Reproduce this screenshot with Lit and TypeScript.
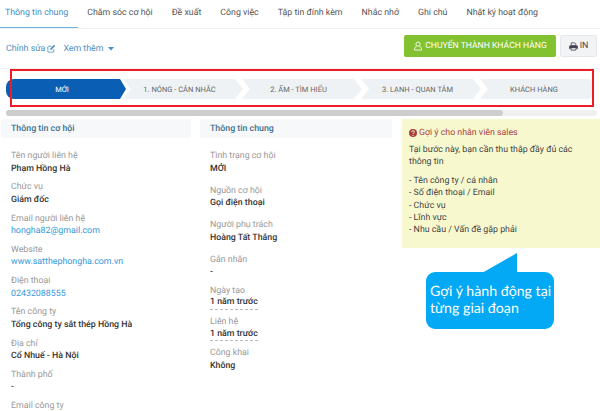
import { LitElement, html, css, svg } from "lit";
import { customElement } from "lit/decorators.js";

const left: [string, string, string?][] = [
  ["Tên người liên hệ", "Phạm Hồng Hà"],
  ["Chức vụ", "Giám đốc"],
  ["Email người liên hệ", "hongha82@gmail.com", "link"],
  ["Website", "www.satthephongha.com.vn", "link"],
  ["Điện thoại", "02432088555", "link"],
  ["Tên công ty", "Tổng công ty sắt thép Hồng Hà"],
  ["Địa chỉ", "Cổ Nhuế - Hà Nội"],
  ["Thành phố", "-"],
  ["Email công ty", ""],
];
const midA: [string, string][] = [
  ["Tình trạng cơ hội", "MỚI"],
  ["Nguồn cơ hội", "Gọi điện thoại"],
  ["Người phụ trách", "Hoàng Tất Thắng"],
];
const midB: [string, string, string?][] = [
  ["Gắn nhãn", "-"],
  ["Ngày tạo", "1 năm trước", "dash"],
  ["Liên hệ", "1 năm trước", "dash"],
  ["Công khai", "Không"],
];
const tabs = ["Thông tin chung", "Chăm sóc cơ hội", "Đề xuất", "Công việc", "Tập tin đính kèm", "Nhắc nhở", "Ghi chú", "Nhật ký hoạt động"];
const steps = ["1. NÓNG - CÂN NHẮC", "2. ẤM - TÌM HIỂU", "3. LẠNH - QUAN TÂM"];

@customElement("app-root")
export class AppRoot extends LitElement {
  static styles = css`
    :host { display: block; position: relative; width: 600px; height: 411px; overflow: hidden; background: #fff; font-family: Roboto, "Noto Sans", sans-serif; font-size: 8.8px; color: #333; text-rendering: geometricPrecision; }
    .tabs { display: flex; height: 29px; border-bottom: 1px solid #eef0f2; box-sizing: border-box; }
    .tab { padding: 0 9.5px; line-height: 27px; color: #555; white-space: nowrap; }
    .tab.active { color: #3f8fc4; border-bottom: 1px solid #6db3e0; height: 28px; padding-left: 5px; box-sizing: border-box; }
    .actions { display: flex; align-items: flex-start; height: 40px; box-sizing: border-box; padding: 6px 3px 0 6px; border-bottom: 1px solid #f1f2f3; }
    .act-left { display: flex; align-items: center; gap: 7px; height: 27px; color: #4a90c4; }
    .act-left span { display: inline-flex; align-items: center; gap: 2px; }
    .spacer { flex: 1; }
    .btn { height: 22px; box-sizing: border-box; display: flex; align-items: center; justify-content: center; border-radius: 2px; gap: 2px; }
    .green { width: 152px; background: #82c12f; color: #fff; margin-right: 4px; white-space: nowrap; font-size: 8.6px; }
    .gray { width: 37px; background: #f1f3f5; color: #445; border: 1px solid #e6e9ec; }
    .stepper { display: flex; height: 20px; margin: 10px 0 0 6px; width: 586px; font-size: 7.5px; color: #666; }
    .step { display: flex; align-items: center; justify-content: center; background: #eff2f5; width: 120px; margin-left: -1px; padding-right: 7px; box-sizing: border-box; clip-path: polygon(0 0, calc(100% - 8px) 0, 100% 50%, calc(100% - 8px) 100%, 0 100%, 8px 50%); }
    .step.first { width: 120px; margin-left: 0; padding-right: 8px; background: #0a5fb4; color: #fff; border-radius: 8px 0 0 8px; clip-path: polygon(0 0, calc(100% - 6px) 0, 100% 50%, calc(100% - 6px) 100%, 0 100%); margin-right: -2px; }
    .step.last { width: 112px; padding-right: 4px; clip-path: polygon(0 0, 100% 0, 100% 100%, 0 100%, 8px 50%); border-radius: 0 4px 4px 0; }
    .scroll { height: 6px; margin: 11px 3px 0 6px; border-radius: 3px; background: #f0f0f0; }
    .thumb { width: 497px; height: 100%; background: #cdcdcd; border-radius: 3px; }
    .cols { display: grid; grid-template-columns: 199px 202px 198px; margin: 3px 0 0 1px; }
    .head { width: 190px; height: 19px; line-height: 20px; padding-left: 10px; box-sizing: border-box; background: #f6f8fa; border-radius: 2px; color: #3c6f8c; font-weight: 500; margin-bottom: 12px; }
    .c2 .head { width: 192px; }
    .field { padding-left: 10px; margin-bottom: 6.25px; line-height: 12.5px; }
    .label { color: #999; }
    .value { color: #333; font-weight: 500; font-size: 8.8px; min-height: 12.5px; }
    .value.link { color: #3498db; font-weight: 400; font-size: 8.85px; }
    .value.dash { display: block; width: fit-content; min-height: 0; line-height: 11.5px; border-bottom: 1px dashed #bbb; }
    .midA .field { margin-bottom: 9.5px; }
    .hint { width: 198px; height: 129px; background: #f8f8cf; padding: 8px 7px; box-sizing: border-box; color: #444; line-height: 12.4px; }
    .hint-title { display: flex; align-items: center; gap: 2px; color: #a8423f; height: 12px; margin-bottom: 5px; }
    .hint p { margin: 0 0 6px; }
    .annot { position: absolute; left: 10px; top: 69px; width: 584px; height: 38px; box-sizing: border-box; border: 2px solid #ee1c25; pointer-events: none; }
    .tail { position: absolute; left: 482px; top: 253px; width: 36px; height: 20px; }
    .bubble { position: absolute; left: 426px; top: 272px; width: 128px; height: 57px; box-sizing: border-box; background: #03a9f4; border-radius: 9px; color: #fff; font-family: Lato, "Open Sans", sans-serif; font-size: 14.2px; line-height: 17px; padding: 10.5px 4px; white-space: nowrap; }
    svg { display: block; flex: none; }
  `;

  private icon(path: unknown, size: number) {
    return html`<svg width=${size} height=${size} viewBox="0 0 16 16">${path}</svg>`;
  }

  private field(f: [string, string, string?]) {
    return html`<div class="field"><div class="label">${f[0]}</div><div class="value ${f[2] ?? ""}">${f[1]}</div></div>`;
  }

  render() {
    return html`
      <nav class="tabs">
        ${tabs.map((t, i) => html`<div class="tab ${i === 0 ? "active" : ""}">${t}</div>`)}
      </nav>
      <div class="actions">
        <div class="act-left">
          <span>Chỉnh sửa ${this.icon(svg`<path d="M12 9v4.5a1 1 0 0 1-1 1H2.5a1 1 0 0 1-1-1V5a1 1 0 0 1 1-1H8" fill="none" stroke="#4a90c4" stroke-width="1.4"/><path d="M6 8l6.5-6.5 2 2L8 10l-2.4.4z" fill="#4a90c4"/>`, 9)}</span>
          <span>Xem thêm <svg width="6" height="4" viewBox="0 0 6 4" style="margin-left:3px"><path d="M0 0h6L3 3.5z" fill="#4a90c4"/></svg></span>
        </div>
        <div class="spacer"></div>
        <div class="btn green">
          ${this.icon(svg`<circle cx="8" cy="5" r="3.4" fill="none" stroke="#fff" stroke-width="1.4"/><path d="M2.5 14.5v-2c0-2 1.5-3.5 3-3.8M13.5 14.5v-2c0-2-1.5-3.5-3-3.8M2.5 14.5h11" fill="none" stroke="#fff" stroke-width="1.4"/>`, 10)}
          CHUYỂN THÀNH KHÁCH HÀNG
        </div>
        <div class="btn gray">
          ${this.icon(svg`<path d="M4 1.5h6.5L12 3v3.5H4z M1 7.5a1 1 0 0 1 1-1h12a1 1 0 0 1 1 1v4.5h-3v2.5H4V12H1z" fill="none" stroke="#445" stroke-width="1.4"/><path d="M1 7h14v4H1z" fill="#445"/>`, 9)}
          IN
        </div>
      </div>
      <div class="stepper">
        <div class="step first">MỚI</div>
        ${steps.map((s) => html`<div class="step">${s}</div>`)}
        <div class="step last">KHÁCH HÀNG</div>
      </div>
      <div class="scroll"><div class="thumb"></div></div>
      <div class="cols">
        <section>
          <div class="head">Thông tin cơ hội</div>
          ${left.map((f) => this.field(f))}
        </section>
        <section class="c2">
          <div class="head">Thông tin chung</div>
          <div class="midA">${midA.map((f) => this.field(f))}</div>
          <div class="midB">${midB.map((f) => this.field(f))}</div>
        </section>
        <aside class="hint">
          <div class="hint-title">
            <svg width="8" height="8" viewBox="0 0 16 16"><circle cx="8" cy="8" r="8" fill="#a8423f"/><path d="M5.5 6a2.5 2.5 0 1 1 3.6 2.2c-.7.4-1.1.7-1.1 1.6" fill="none" stroke="#f8f8cf" stroke-width="2"/><circle cx="8" cy="12.6" r="1.2" fill="#f8f8cf"/></svg>
            Gợi ý cho nhân viên sales
          </div>
          <p>Tại bước này, bạn cần thu thập đầy đủ các<br />thông tin</p>
          <div>- Tên công ty / cá nhân<br />- Số điện thoại / Email<br />- Chức vụ<br />- Lĩnh vực<br />- Nhu cầu / Vấn đề gặp phải</div>
        </aside>
      </div>
      <div class="annot"></div>
      <svg class="tail" viewBox="0 0 36 20"><path d="M0 20L35 0V20z" fill="#03a9f4"/></svg>
      <div class="bubble">Gợi ý hành động tại<br />từng giai đoạn</div>
    `;
  }
}
